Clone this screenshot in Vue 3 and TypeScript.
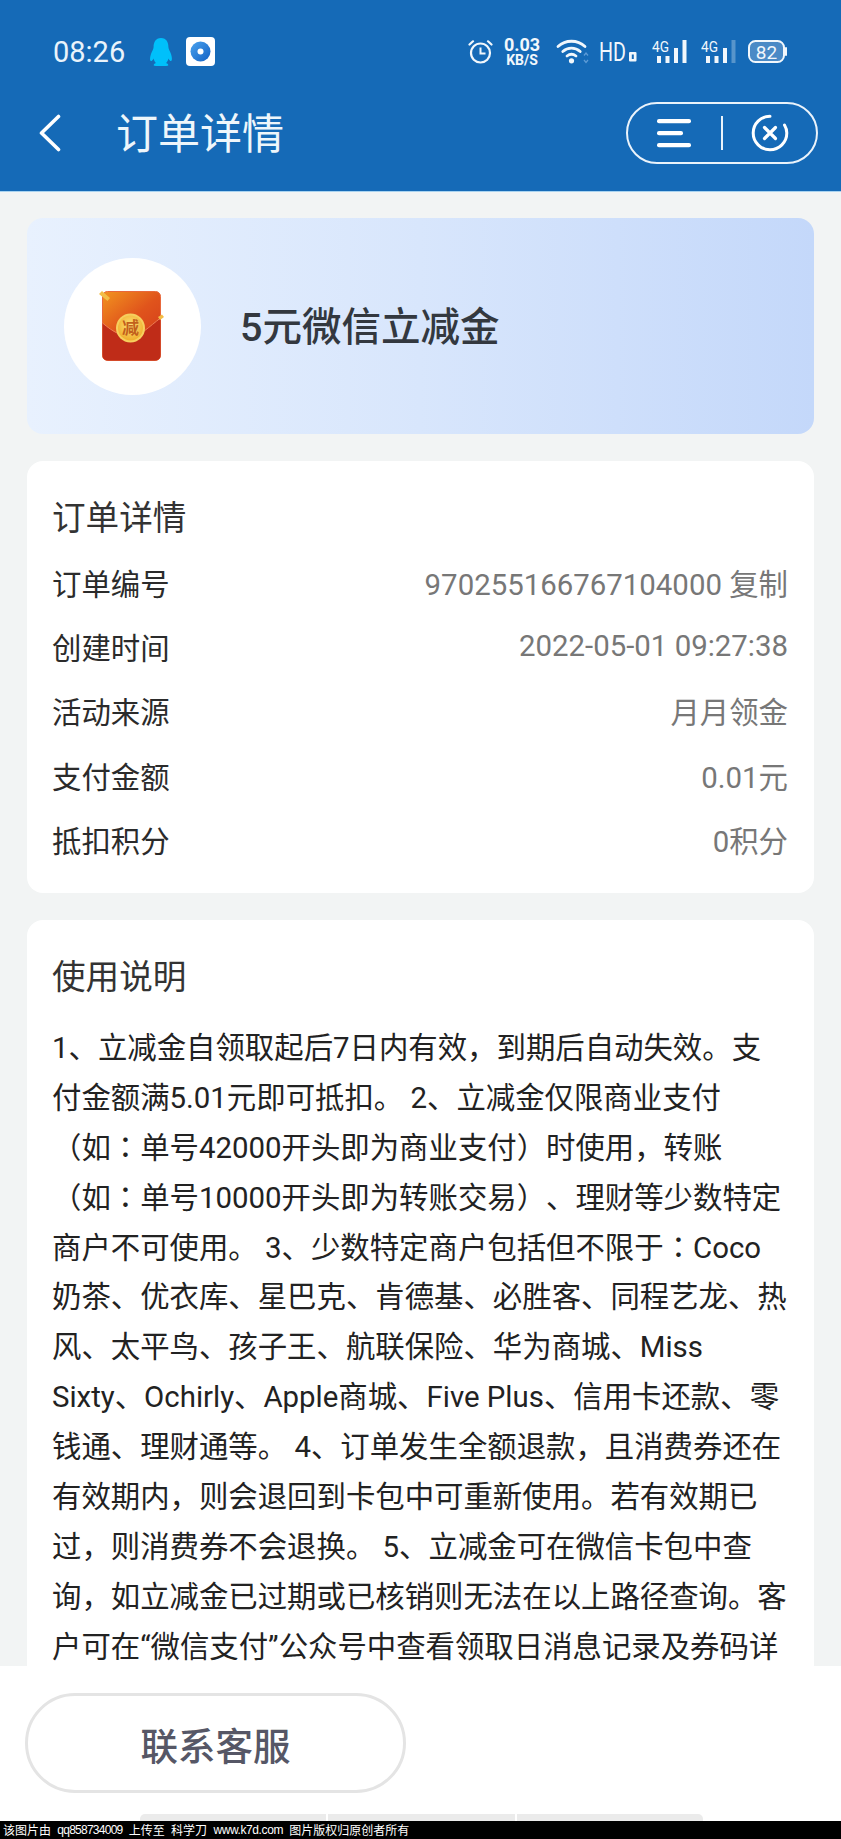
<script setup lang="ts">
interface Row { label: string; value: string }
const rows: Row[] = [
  { label: '订单编号', value: '970255166767104000 复制' },
  { label: '创建时间', value: '2022-05-01 09:27:38' },
  { label: '活动来源', value: '月月领金' },
  { label: '支付金额', value: '0.01元' },
  { label: '抵扣积分', value: '0积分' },
]
const lines: string[] = [
  '1、立减金自领取起后7日内有效，到期后自动失效。支',
  '付金额满5.01元即可抵扣。 2、立减金仅限商业支付',
  '（如：单号42000开头即为商业支付）时使用，转账',
  '（如：单号10000开头即为转账交易）、理财等少数特定',
  '商户不可使用。 3、少数特定商户包括但不限于：Coco',
  '奶茶、优衣库、星巴克、肯德基、必胜客、同程艺龙、热',
  '风、太平鸟、孩子王、航联保险、华为商城、Miss',
  'Sixty、Ochirly、Apple商城、Five Plus、信用卡还款、零',
  '钱通、理财通等。 4、订单发生全额退款，且消费券还在',
  '有效期内，则会退回到卡包中可重新使用。若有效期已',
  '过，则消费券不会退换。 5、立减金可在微信卡包中查',
  '询，如立减金已过期或已核销则无法在以上路径查询。客',
  '户可在“微信支付”公众号中查看领取日消息记录及券码详',
]
const segments = (line: string): string[] => line.split(/(：)/).filter(Boolean)
const signalBars = [
  { x: 5, y: 16, h: 7, o: 1 },
  { x: 13.5, y: 16, h: 7, o: 1 },
  { x: 22, y: 8, h: 15, o: 1 },
  { x: 30.5, y: 0, h: 23, o: 1 },
]
const signalBars2 = signalBars.map((b, i) => (i === 3 ? { ...b, o: 0.3 } : b))
</script>

<template>
  <div class="page">
    <header class="top">
      <div class="status">
        <div class="status-left">
          <span class="time">08:26</span>
          <svg class="qq" width="24" height="28" viewBox="0 0 24 28" aria-hidden="true">
            <path d="M12 0C6.500 0 4.600 4.600 4.600 9c0 2-1.600 4-2.600 7-1.300 4-1.200 7 0 7 .9 0 1.900-1.200 2.600-2.600.4 2 1.200 3.400 2.400 4.600-1.600.5-2.600 1.400-2.200 2.400.3.5 3 .6 7.200.6s6.900-.1 7.200-.6c.4-1-.6-1.900-2.200-2.400 1.200-1.200 2-2.600 2.400-4.600.7 1.400 1.700 2.600 2.600 2.600 1.200 0 1.300-3 0-7-1-3-2.600-5-2.600-7C19.400 4.600 17.500 0 12 0z" fill="#00c0fb" />
          </svg>
          <svg class="disc" width="29" height="29" viewBox="0 0 29 29" aria-hidden="true">
            <defs>
              <linearGradient id="discFill" x1="0" y1="0" x2="1" y2="1">
                <stop offset="0" stop-color="#4aa2ee" />
                <stop offset="1" stop-color="#1261c4" />
              </linearGradient>
            </defs>
            <rect width="29" height="29" rx="4" fill="#fff" />
            <circle cx="14.500" cy="14.500" r="10" fill="url(#discFill)" />
            <circle cx="14.500" cy="14.500" r="3" fill="#fff" />
          </svg>
        </div>
        <div class="status-right">
          <svg width="25" height="25" viewBox="0 0 25 25" fill="none" stroke="#f1f7fc" aria-hidden="true">
            <circle cx="12.500" cy="14" r="9.500" stroke-width="2.200" />
            <path d="M12.500 8.500V14.500H17.500" stroke-width="2" />
            <path d="M1.500 5.500L5 2.300M23.500 5.500L20 2.300" stroke-width="2.200" stroke-linecap="round" />
          </svg>
          <div class="speed"><span class="speed-num">0.03</span><span class="speed-unit">KB/S</span></div>
          <svg width="33" height="25" viewBox="0 0 33 25" fill="none" aria-hidden="true">
            <g stroke="#f1f7fc" stroke-width="2.800" stroke-linecap="round">
              <path d="M2 7.500C9.500 .5 21.500 .5 29 7.500" />
              <path d="M6.800 12.500C11.800 8 19.200 8 24.200 12.500" />
              <path d="M11 17C13.800 14.800 17.200 14.800 20 17" />
            </g>
            <circle cx="15.500" cy="21.800" r="2.600" fill="#f1f7fc" />
            <path d="M28 16.500l2-2.500 2 2.500M28 21l2 2.500 2-2.500" stroke="#5d9bd6" stroke-width="1.300" />
          </svg>
          <svg class="hd-icon" width="38" height="33" viewBox="0 -4 38 33" aria-hidden="true">
            <text x="0" y="22" class="hd" textLength="27" lengthAdjust="spacingAndGlyphs">HD</text>
            <rect x="30" y="13" width="7.500" height="9.500" rx="1" fill="#f1f7fc" />
            <rect x="32.800" y="15.500" width="2" height="4.500" fill="#156ab7" />
          </svg>
          <svg class="sig sig-first" width="36" height="32" viewBox="0 -4 36 32" aria-hidden="true">
            <text x="0" y="12" class="g4" textLength="17" lengthAdjust="spacingAndGlyphs">4G</text>
            <rect v-for="(b, i) in signalBars" :key="i" :x="b.x" :y="b.y" width="4" :height="b.h" fill="#f1f7fc" :opacity="b.o" />
          </svg>
          <svg class="sig" width="36" height="32" viewBox="0 -4 36 32" aria-hidden="true">
            <text x="0" y="12" class="g4" textLength="17" lengthAdjust="spacingAndGlyphs">4G</text>
            <rect v-for="(b, i) in signalBars2" :key="i" :x="b.x" :y="b.y" width="4" :height="b.h" fill="#f1f7fc" :opacity="b.o" />
          </svg>
          <svg class="batt" width="40" height="24" viewBox="0 0 40 24" aria-hidden="true">
            <rect x="1" y="1" width="35" height="21" rx="6.500" fill="#4a8ac6" stroke="#f1f7fc" stroke-width="2" />
            <path d="M38 8v7" stroke="#f1f7fc" stroke-width="2" stroke-linecap="round" />
            <text x="18.500" y="18.500" class="batt-num" text-anchor="middle">82</text>
          </svg>
        </div>
      </div>
      <div class="nav">
        <svg class="back" width="24" height="38" viewBox="0 0 24 38" fill="none" aria-hidden="true">
          <path d="M20.500 2.500L3.500 19L20.500 35.500" stroke="#fff" stroke-width="3.600" stroke-linecap="round" stroke-linejoin="round" />
        </svg>
        <h1 class="nav-title">订单详情</h1>
        <div class="capsule">
          <svg width="34" height="30" viewBox="0 0 34 30" aria-hidden="true">
            <g fill="#fff">
              <rect x="0" y="1" width="34" height="4.200" rx="2" />
              <rect x="0" y="13" width="26" height="4.200" rx="2" />
              <rect x="0" y="25" width="34" height="4.200" rx="2" />
            </g>
          </svg>
          <span class="capsule-line"></span>
          <svg width="38" height="38" viewBox="0 0 38 38" fill="none" aria-hidden="true">
            <path d="M19 2.200A16.800 16.800 0 1 0 35.800 19C35.800 16 35 13.500 33.500 11" stroke="#fff" stroke-width="3" stroke-linecap="round" />
            <path d="M13.500 13.500L24.500 24.500M24.500 13.500L13.500 24.500" stroke="#fff" stroke-width="3.200" stroke-linecap="round" />
          </svg>
        </div>
      </div>
    </header>

    <main class="content">
      <section class="hero">
        <div class="hero-icon">
          <svg class="packet" width="66" height="76" viewBox="0 0 66 76" aria-hidden="true">
            <defs>
              <linearGradient id="packetTop" x1="0" y1="0" x2=".7" y2="1">
                <stop offset="0" stop-color="#f2941f" />
                <stop offset=".5" stop-color="#e0541c" />
                <stop offset="1" stop-color="#d23a1c" />
              </linearGradient>
              <radialGradient id="coin" cx=".5" cy=".4" r=".7">
                <stop offset="0" stop-color="#fde27a" />
                <stop offset="1" stop-color="#eea51f" />
              </radialGradient>
            </defs>
            <rect x="3.500" y="3.500" width="58" height="69" rx="5" fill="url(#packetTop)" stroke="#e8683c" />
            <path d="M3.500 35C14 44 24 49 32 49S51 38 61.500 30V67.500a5 5 0 0 1-5 5H8.500a5 5 0 0 1-5-5z" fill="#bf2c18" />
            <path d="M3.500 35C14 44 24 49 32 49S51 38 61.500 30" fill="none" stroke="#ee7f55" stroke-width="1" />
            <path d="M0 6L3 3L11 10L8.500 13z" fill="#f3bd46" />
            <path d="M59 29L63 26.500L65 29L61 32z" fill="#f3bd46" />
            <circle cx="31.500" cy="40" r="14.500" fill="#f6cf5e" />
            <circle cx="31.500" cy="40" r="12.500" fill="url(#coin)" />
            <text x="31.500" y="46" class="coin-text" text-anchor="middle">减</text>
          </svg>
        </div>
        <h2 class="hero-title">5元微信立减金</h2>
      </section>

      <section class="card order">
        <h3 class="card-title">订单详情</h3>
        <div v-for="row in rows" :key="row.label" class="row">
          <span class="row-label">{{ row.label }}</span>
          <span class="row-value">{{ row.value }}</span>
        </div>
      </section>

      <section class="card usage">
        <h3 class="card-title usage-title">使用说明</h3>
        <p v-for="(line, i) in lines" :key="i" class="usage-line"><span
          v-for="(seg, j) in segments(line)" :key="j" :class="{ colon: seg === '：' }">{{ seg }}</span></p>
      </section>
    </main>

    <footer class="foot">
      <div class="foot-main">
        <button class="service" type="button">联系客服</button>
        <div class="strip"><i></i><i></i><i></i></div>
      </div>
      <div class="mark">
        <span>该图片由</span>
        <span class="mark-qq">qq858734009</span>
        <span>上传至</span>
        <span>科学刀</span>
        <span class="mark-web">www.k7d.com</span>
        <span>图片版权归原创者所有</span>
      </div>
    </footer>
  </div>
</template>

<style scoped>
.page {
  position: relative;
  width: 841px;
  height: 1839px;
  overflow: hidden;
  background: #f2f4f4;
  font-family: Roboto, "Noto Sans CJK SC", sans-serif;
  text-spacing-trim: space-all;
}
.top {
  height: 191px;
  background: #156ab7;
  border-bottom: 1px solid #a9d3f0;
  box-sizing: content-box;
}
.status {
  height: 101px;
  display: flex;
  align-items: center;
  justify-content: space-between;
  padding: 2px 53px 0 53px;
  box-sizing: border-box;
}
.status-left {
  display: flex;
  align-items: center;
}
.time {
  font-size: 29px;
  color: #e9f3fb;
  width: 96px;
  line-height: 34px;
}
.qq {
  margin-right: 13px;
}
.status-right {
  display: flex;
  align-items: center;
}
.speed {
  display: flex;
  flex-direction: column;
  align-items: center;
  width: 38px;
  margin: 0 15px 0 10px;
  color: #f1f7fc;
  font-weight: 700;
}
.speed-num {
  font-size: 18px;
  line-height: 16px;
}
.speed-unit {
  font-size: 14px;
  line-height: 14px;
}
.hd-icon {
  margin-left: 10px;
}
.hd {
  font-size: 25px;
  fill: #f1f7fc;
  font-family: Roboto, sans-serif;
}
.g4 {
  font-size: 15px;
  fill: #f1f7fc;
  font-family: Roboto, sans-serif;
}
.sig {
  margin-left: 13px;
}
.sig-first {
  margin-left: 15px;
}
.batt {
  margin-left: 11px;
}
.batt-num {
  font-size: 19px;
  fill: #f1f7fc;
  font-family: Roboto, sans-serif;
}
.nav {
  height: 64px;
  display: flex;
  align-items: center;
  padding: 0 23px 0 38px;
}
.back {
  flex: none;
}
.nav-title {
  margin: 3px 0 0 54px;
  font-size: 42px;
  font-weight: 400;
  color: #eef6fb;
  line-height: 48px;
}
.capsule {
  margin-left: auto;
  width: 192px;
  height: 62px;
  box-sizing: border-box;
  border: 2px solid #eaf3fb;
  border-radius: 31px;
  display: flex;
  align-items: center;
  padding-left: 29px;
}
.capsule-line {
  width: 2px;
  height: 34px;
  background: #eaf3fb;
  margin: 0 28px 0 30px;
}
.content {
  padding: 26px 27px 0;
}
.hero {
  height: 216px;
  border-radius: 16px;
  background: linear-gradient(90deg, #e8f1fe 0%, #d8e6fc 50%, #c4d8fa 100%);
  display: flex;
  align-items: center;
  padding-left: 37px;
}
.hero-icon {
  width: 137px;
  height: 137px;
  border-radius: 50%;
  background: #fff;
  display: flex;
  align-items: center;
  justify-content: center;
  flex: none;
}
.packet {
  margin-left: -1px;
}
.coin-text {
  font-size: 17px;
  font-weight: 700;
  fill: #c2601c;
  font-family: "Noto Sans CJK SC", sans-serif;
}
.hero-title {
  margin: 4px 0 0 39px;
  font-size: 39.5px;
  font-weight: 500;
  color: #33383f;
  line-height: 50px;
}
.card {
  background: #fff;
  border-radius: 16px;
  margin-top: 27px;
  padding: 0 26px 0 25px;
}
.order {
  height: 432px;
  padding-top: 34px;
  box-sizing: border-box;
}
.card-title {
  margin: 0;
  font-size: 33.600px;
  font-weight: 400;
  line-height: 48px;
  color: #333;
  height: 55px;
}
.row {
  height: 64.2px;
  display: flex;
  align-items: center;
  justify-content: space-between;
  font-size: 29.400px;
}
.row-label {
  color: #2b2b2b;
}
.row-value {
  color: #777;
}
.usage {
  padding-top: 34px;
  padding-bottom: 40px;
}
.usage-title {
  height: 70px;
}
.usage-line {
  margin: 0;
  height: 49.9px;
  line-height: 49.9px;
  font-size: 29.400px;
  color: #222;
  white-space: pre;
}
.colon {
  font-family: Roboto, "Noto Sans CJK TC", sans-serif;
}
.foot {
  position: absolute;
  left: 0;
  right: 0;
  bottom: 0;
}
.foot-main {
  height: 155px;
  background: #fff;
  display: flex;
  flex-direction: column;
  align-items: flex-start;
  padding: 27px 0 0 25px;
  box-sizing: border-box;
}
.service {
  width: 381px;
  height: 100px;
  border: 3px solid #e4e4e4;
  border-radius: 50px;
  background: #fff;
  font-family: inherit;
  font-size: 37.500px;
  font-weight: 500;
  color: #565766;
  padding: 0;
}
.strip {
  margin-top: auto;
  margin-left: 115px;
  width: 563px;
  height: 7px;
  display: flex;
  gap: 2px;
}
.strip i {
  background: #ebebeb;
  height: 100%;
  flex: 186;
}
.strip i:first-child {
  border-top-left-radius: 5px;
}
.strip i:last-child {
  border-top-right-radius: 5px;
}
.mark {
  height: 18px;
  background: #000;
  color: #fff;
  font-size: 12px;
  line-height: 18px;
  padding-left: 3px;
  display: flex;
  gap: 6.300px;
  white-space: pre;
  font-family: "Noto Sans CJK SC", sans-serif;
}
.mark-qq,
.mark-web {
  font-family: "Liberation Sans", sans-serif;
}
.mark-qq {
  letter-spacing: -0.75px;
}
.mark-web {
  letter-spacing: -0.4px;
}
</style>
